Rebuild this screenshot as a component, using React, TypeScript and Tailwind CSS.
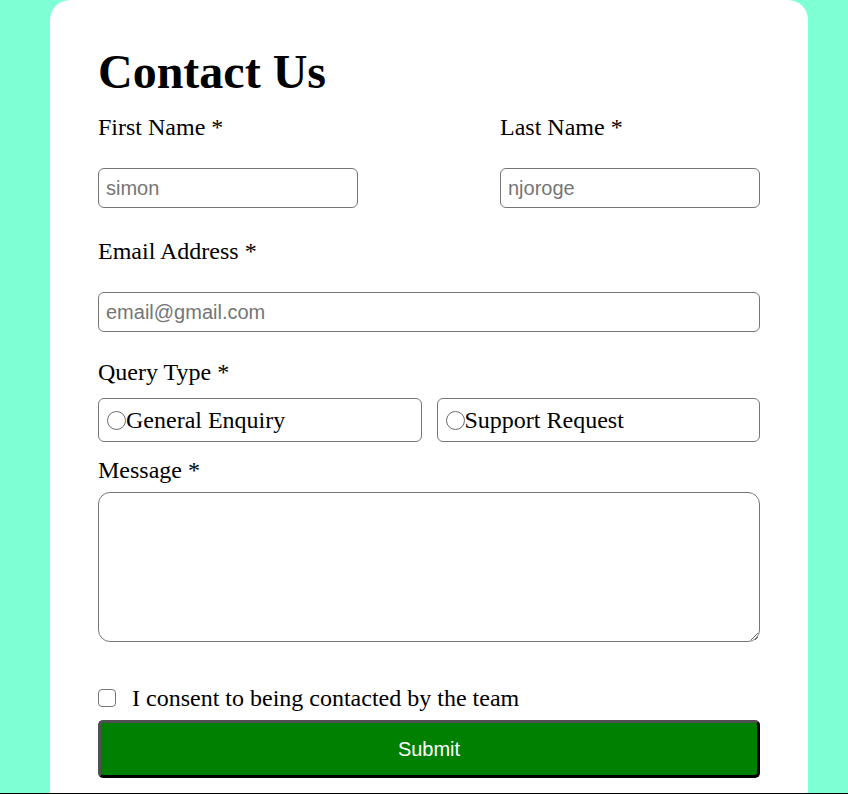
import React, { useState } from 'react';

export default function App() {
  const [query, setQuery] = useState('');
  const [consent, setConsent] = useState(false);

  const label = 'block text-[24px] leading-[28px] text-black';
  const input =
    'w-full h-[40px] px-[7px] border border-[#767676] rounded-[6px] bg-white text-[20px] font-["Liberation_Sans",Arial,sans-serif] text-black placeholder:text-[#757575] outline-none';

  return (
    <div className="h-[794px] overflow-hidden flex flex-col bg-[#7fffd4] font-['Liberation_Serif','Times_New_Roman',serif]">
      <div className="flex-1 overflow-hidden">
        <form
          className="ml-[50px] w-[758px] min-h-full bg-white rounded-t-[20px] px-[48px] pt-[44px] pb-[40px]"
          onSubmit={(e) => e.preventDefault()}
        >
          <h1 className="text-[48px] leading-[55px] font-bold text-black">Contact Us</h1>

          {/* Names */}
          <div className="mt-[14px] flex justify-between">
            <div className="w-[260px]">
              <label className={label}>First Name *</label>
              <input type="text" placeholder="simon" className={`${input} mt-[27px]`} />
            </div>
            <div className="w-[260px]">
              <label className={label}>Last Name *</label>
              <input type="text" placeholder="njoroge" className={`${input} mt-[27px]`} />
            </div>
          </div>

          {/* Email */}
          <label className={`${label} mt-[29px]`}>Email Address *</label>
          <input type="email" placeholder="email@gmail.com" className={`${input} mt-[27px]`} />

          {/* Query type */}
          <label className={`${label} mt-[26px]`}>Query Type *</label>
          <div className="mt-[12px] flex gap-[15px]">
            {['General Enquiry', 'Support Request'].map((q) => (
              <label
                key={q}
                className="flex-1 h-[44px] flex items-center pl-[8px] border border-[#767676] rounded-[6px] text-[24px] leading-[28px] text-black cursor-pointer"
              >
                <input
                  type="radio"
                  name="query"
                  checked={query === q}
                  onChange={() => setQuery(q)}
                  className="appearance-none w-[19px] h-[19px] m-0 rounded-full border border-[#6b6b6b] bg-white checked:border-[5px] checked:border-[#0075ff]"
                />
                {q}
              </label>
            ))}
          </div>

          {/* Message */}
          <label className={`${label} mt-[14px]`}>Message *</label>
          <textarea className="mt-[8px] block w-full h-[150px] border border-[#767676] rounded-[12px] p-[7px] text-[20px] font-['Liberation_Sans',Arial,sans-serif] outline-none" />

          {/* Consent */}
          <label className="mt-[42px] flex items-center text-[24px] leading-[28px] text-black cursor-pointer">
            <input
              type="checkbox"
              checked={consent}
              onChange={(e) => setConsent(e.target.checked)}
              className="appearance-none w-[18px] h-[18px] m-0 border border-[#767676] rounded-[4px] bg-white checked:bg-[#0075ff] checked:border-[#0075ff]"
            />
            <span className="ml-[16px]">I consent to being contacted by the team</span>
          </label>

          <button
            type="submit"
            className="mt-[8px] block w-full h-[58px] bg-[#008000] text-white text-[20px] font-['Liberation_Sans',Arial,sans-serif] rounded-[5px] border-[3px] border-t-[#505050] border-l-[#505050] border-r-black border-b-black"
          >
            Submit
          </button>
        </form>
      </div>
      <div className="h-px bg-black" />
    </div>
  );
}
